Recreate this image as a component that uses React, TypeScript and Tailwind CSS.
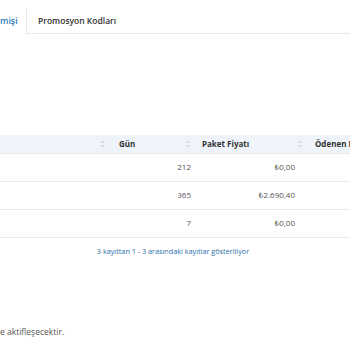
import React from "react";

const rows = [
  { gun: "212", fiyat: "0,00" },
  { gun: "365", fiyat: "2.690,40" },
  { gun: "7", fiyat: "0,00" },
];

function SortIcon() {
  return (
    <svg width="5" height="8" viewBox="0 0 5 8" className="shrink-0">
      <path d="M2.5 0.5 L4.5 3 L0.5 3 Z" fill="#d4d8dd" />
      <path d="M2.5 7.5 L4.5 5 L0.5 5 Z" fill="#d4d8dd" />
    </svg>
  );
}

export default function App() {
  return (
    <div
      className="w-[350px] h-[350px] overflow-hidden bg-white text-[#555]"
      style={{ fontFamily: '"Open Sans", "Noto Sans", sans-serif' }}
    >
      {/* sekmeler */}
      <div className="flex pt-[8px]">
        <div className="h-[26px] w-[27px] flex items-center pt-[2px] border-r border-[#e6e8eb] bg-white text-[8.8px] font-semibold text-[#2b7bba]">
          mişi
        </div>
        <div className="flex-1 h-[26px] flex items-center pt-[2px] pl-[11px] border-b border-[#e6e8eb] text-[8.5px] font-semibold text-[#333]">
          Promosyon Kodları
        </div>
      </div>

      {/* tablo */}
      <div className="mt-[101px]">
        <table className="w-[400px] border-collapse text-[8px] table-fixed">
          <colgroup>
            <col className="w-[113px]" />
            <col className="w-[83px]" />
            <col className="w-[113px]" />
            <col className="w-[91px]" />
          </colgroup>
          <thead>
            <tr className="bg-[#eef4fa] h-[18px]">
              <th className="px-[6px] font-bold text-left">
                <div className="flex justify-end pr-[2px]">
                  <SortIcon />
                </div>
              </th>
              <th className="px-[6px] font-bold text-left text-[#333]">
                <div className="flex items-center justify-between">
                  <span>Gün</span>
                  <SortIcon />
                </div>
              </th>
              <th className="px-[6px] font-bold text-left text-[#333]">
                <div className="flex items-center justify-between">
                  <span>Paket Fiyatı</span>
                  <SortIcon />
                </div>
              </th>
              <th className="px-[6px] font-bold text-left text-[#333] whitespace-nowrap overflow-hidden">
                Ödenen Miktar
              </th>
            </tr>
          </thead>
          <tbody>
            {rows.map((r, i) => (
              <tr key={i} className="h-[28px] border-t border-[#e8ebee]">
                <td></td>
                <td className="text-right pr-[5px]">{r.gun}</td>
                <td className="text-right pr-[14px]">
                  <span className="font-['DejaVu_Sans',sans-serif] text-[7.5px]">₺</span>
                  {r.fiyat}
                </td>
                <td></td>
              </tr>
            ))}
            <tr className="border-t border-[#e8ebee]">
              <td colSpan={4}></td>
            </tr>
          </tbody>
        </table>
        <div className="w-[346px] text-center text-[7.25px] text-[#2b6ea8] mt-[8px]">
          3 kayıttan 1 - 3 arasındaki kayıtlar gösteriliyor
        </div>
      </div>

      <div className="mt-[70px] text-[8.5px]">e aktifleşecektir.</div>
    </div>
  );
}
